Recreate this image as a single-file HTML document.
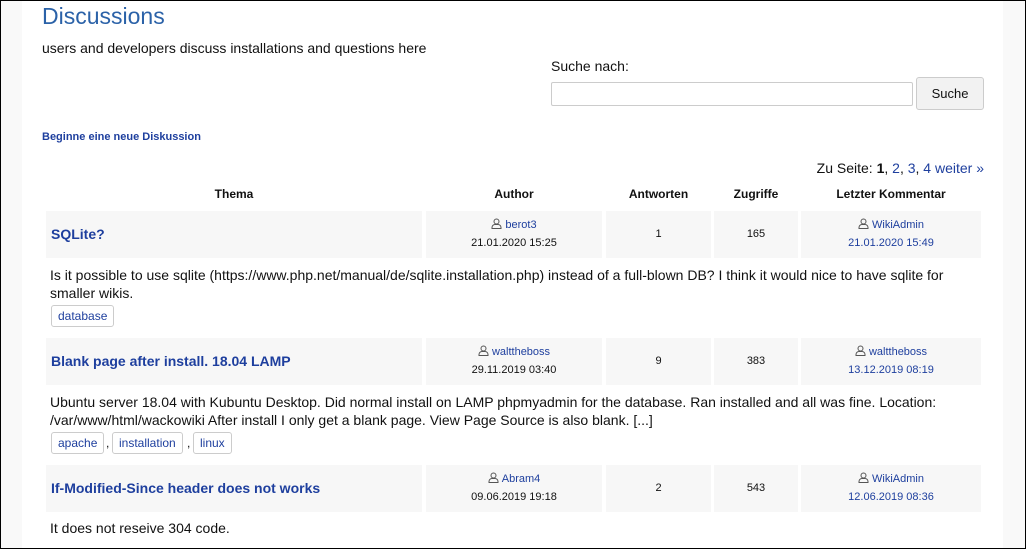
<!DOCTYPE html>
<html><head><meta charset="utf-8"><style>
*{margin:0;padding:0;box-sizing:border-box}
html,body{width:1026px;height:549px;overflow:hidden;background:#fff}
body{font-family:"Liberation Sans",Arial,sans-serif;color:#111;position:relative}
.frame{position:absolute;left:0;top:0;width:1026px;height:549px;border:1px solid #000;z-index:5;pointer-events:none}
.a{position:absolute;white-space:nowrap}
.side{position:absolute;top:0;bottom:0;background:#f9f9f9}
.c{position:absolute;background:#f7f7f7}
.lk{color:#1e3f9e;text-decoration:none}
.t{font-weight:bold;font-size:14px;color:#1e3f9e}
.cen{text-align:center;font-size:11px;line-height:18px}
.tag{position:absolute;height:22px;border:1px solid #ccc;border-radius:3px;font-size:12px;color:#1e3f9e;line-height:20px;padding:0 6px}
.desc{position:absolute;left:50px;font-size:14px;line-height:18px;color:#111;white-space:normal;width:930px}
.th{position:absolute;top:187px;font-size:12px;font-weight:bold;text-align:center}
svg{vertical-align:-1px;margin-right:3px}
</style></head><body>
<div class="frame"></div>
<div class="side" style="left:0;width:22px"></div>
<div class="side" style="left:1003px;right:0"></div>
<div class="a" style="left:42px;top:3px;font-size:23px;color:#2b62a8">Discussions</div>
<div class="a" style="left:42px;top:40px;font-size:14px">users and developers discuss installations and questions here</div>
<div class="a" style="left:551px;top:58px;font-size:14px">Suche nach:</div>
<div class="a" style="left:551px;top:82px;width:362px;height:24px;border:1px solid #ccc;border-radius:2px"></div>
<div class="a" style="left:916px;top:77px;width:68px;height:33px;border:1px solid #ccc;border-radius:3px;background:#f2f2f2;font-size:13px;text-align:center;line-height:31px">Suche</div>
<div class="a" style="left:42px;top:131px;font-size:11px;font-weight:bold;color:#1e3f9e">Beginne eine neue Diskussion</div>
<div class="a" style="right:42px;top:160px;font-size:14px">Zu Seite: <b>1</b>, <span class="lk">2</span>, <span class="lk">3</span>, <span class="lk">4 weiter »</span></div>
<div class="th" style="left:46px;width:376px">Thema</div>
<div class="th" style="left:426px;width:176px">Author</div>
<div class="th" style="left:606px;width:105px">Antworten</div>
<div class="th" style="left:714px;width:84px">Zugriffe</div>
<div class="th" style="left:801px;width:180px">Letzter Kommentar</div>

<!-- row 1 -->
<div class="c" style="left:46px;top:211px;width:376px;height:47px"><div class="a t" style="left:5px;top:15px">SQLite?</div></div>
<div class="c cen" style="left:426px;top:211px;width:176px;height:47px;padding-top:5px"><svg width="11" height="11" viewBox="0 0 11 11" fill="none" stroke="#555" stroke-width="1"><circle cx="5.5" cy="3.5" r="2.5"/><path d="M1 10.5v-1a3 3 0 0 1 3-3h3a3 3 0 0 1 3 3v1z"/></svg><span class="lk">berot3</span><br>21.01.2020 15:25</div>
<div class="c cen" style="left:606px;top:211px;width:105px;height:47px;line-height:47px">1</div>
<div class="c cen" style="left:714px;top:211px;width:84px;height:47px;line-height:47px">165</div>
<div class="c cen" style="left:801px;top:211px;width:180px;height:47px;padding-top:5px"><svg width="11" height="11" viewBox="0 0 11 11" fill="none" stroke="#555" stroke-width="1"><circle cx="5.5" cy="3.5" r="2.5"/><path d="M1 10.5v-1a3 3 0 0 1 3-3h3a3 3 0 0 1 3 3v1z"/></svg><span class="lk">WikiAdmin</span><br><span class="lk">21.01.2020 15:49</span></div>
<div class="desc" style="top:266px">Is it possible to use sqlite (https://www.php.net/manual/de/sqlite.installation.php) instead of a full-blown DB? I think it would nice to have sqlite for smaller wikis.</div>
<div class="tag" style="left:51px;top:305px">database</div>

<!-- row 2 -->
<div class="c" style="left:46px;top:338px;width:376px;height:47px"><div class="a t" style="left:5px;top:15px">Blank page after install. 18.04 LAMP</div></div>
<div class="c cen" style="left:426px;top:338px;width:176px;height:47px;padding-top:5px"><svg width="11" height="11" viewBox="0 0 11 11" fill="none" stroke="#555" stroke-width="1"><circle cx="5.5" cy="3.5" r="2.5"/><path d="M1 10.5v-1a3 3 0 0 1 3-3h3a3 3 0 0 1 3 3v1z"/></svg><span class="lk">walttheboss</span><br>29.11.2019 03:40</div>
<div class="c cen" style="left:606px;top:338px;width:105px;height:47px;line-height:47px">9</div>
<div class="c cen" style="left:714px;top:338px;width:84px;height:47px;line-height:47px">383</div>
<div class="c cen" style="left:801px;top:338px;width:180px;height:47px;padding-top:5px"><svg width="11" height="11" viewBox="0 0 11 11" fill="none" stroke="#555" stroke-width="1"><circle cx="5.5" cy="3.5" r="2.5"/><path d="M1 10.5v-1a3 3 0 0 1 3-3h3a3 3 0 0 1 3 3v1z"/></svg><span class="lk">walttheboss</span><br><span class="lk">13.12.2019 08:19</span></div>
<div class="desc" style="top:393px">Ubuntu server 18.04 with Kubuntu Desktop. Did normal install on LAMP phpmyadmin for the database. Ran installed and all was fine. Location: /var/www/html/wackowiki After install I only get a blank page. View Page Source is also blank. [...]</div>
<div class="tag" style="left:51px;top:432px">apache</div>
<div class="a" style="left:106px;top:436px;font-size:12px">,</div>
<div class="tag" style="left:112px;top:432px">installation</div>
<div class="a" style="left:187px;top:436px;font-size:12px">,</div>
<div class="tag" style="left:193px;top:432px">linux</div>

<!-- row 3 -->
<div class="c" style="left:46px;top:465px;width:376px;height:47px"><div class="a t" style="left:5px;top:15px">If-Modified-Since header does not works</div></div>
<div class="c cen" style="left:426px;top:465px;width:176px;height:47px;padding-top:5px"><svg width="11" height="11" viewBox="0 0 11 11" fill="none" stroke="#555" stroke-width="1"><circle cx="5.5" cy="3.5" r="2.5"/><path d="M1 10.5v-1a3 3 0 0 1 3-3h3a3 3 0 0 1 3 3v1z"/></svg><span class="lk">Abram4</span><br>09.06.2019 19:18</div>
<div class="c cen" style="left:606px;top:465px;width:105px;height:47px;line-height:47px">2</div>
<div class="c cen" style="left:714px;top:465px;width:84px;height:47px;line-height:47px">543</div>
<div class="c cen" style="left:801px;top:465px;width:180px;height:47px;padding-top:5px"><svg width="11" height="11" viewBox="0 0 11 11" fill="none" stroke="#555" stroke-width="1"><circle cx="5.5" cy="3.5" r="2.5"/><path d="M1 10.5v-1a3 3 0 0 1 3-3h3a3 3 0 0 1 3 3v1z"/></svg><span class="lk">WikiAdmin</span><br><span class="lk">12.06.2019 08:36</span></div>
<div class="desc" style="top:519px">It does not reseive 304 code.</div>
</body></html>
